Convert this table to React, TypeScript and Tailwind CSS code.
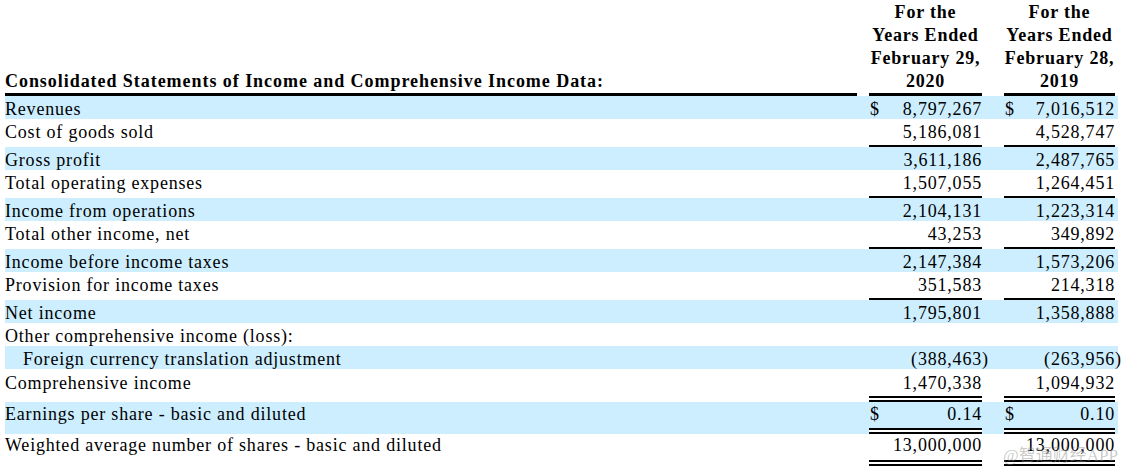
/**
 * Selected financial data — consolidated statements of income table.
 * Two fiscal-year columns, alternating light-blue bands, SEC-style rules.
 */

type Rule = "none" | "single" | "double";

interface Row {
  label: string;
  indent?: boolean;
  band: boolean;
  a?: string;
  b?: string;
  dollar?: boolean;
  paren?: boolean;
  rule: Rule;
  box: string; // height + top padding of the text line
}

const BAND = "bg-[#cceeff]";

const RULES: Record<Rule, string> = {
  none: "",
  single: "border-b-2 border-black",
  double: "border-b-[6px] border-double border-black",
};

const ROWS: Row[] = [
  { label: "Revenues", band: true, a: "8,797,267", b: "7,016,512", dollar: true, rule: "none", box: "h-[23px] pt-[2px]" },
  { label: "Cost of goods sold", band: false, a: "5,186,081", b: "4,528,747", rule: "single", box: "h-[26px] pt-[2px]" },
  { label: "Gross profit", band: true, a: "3,611,186", b: "2,487,765", rule: "none", box: "h-[23px] pt-[2px]" },
  { label: "Total operating expenses", band: false, a: "1,507,055", b: "1,264,451", rule: "single", box: "h-[26px] pt-[2px]" },
  { label: "Income from operations", band: true, a: "2,104,131", b: "1,223,314", rule: "none", box: "h-[23px] pt-[2px]" },
  { label: "Total other income, net", band: false, a: "43,253", b: "349,892", rule: "single", box: "h-[26px] pt-[2px]" },
  { label: "Income before income taxes", band: true, a: "2,147,384", b: "1,573,206", rule: "none", box: "h-[23px] pt-[2px]" },
  { label: "Provision for income taxes", band: false, a: "351,583", b: "214,318", rule: "single", box: "h-[26px] pt-[2px]" },
  { label: "Net income", band: true, a: "1,795,801", b: "1,358,888", rule: "none", box: "h-[23px] pt-[2px]" },
  { label: "Other comprehensive income (loss):", band: false, rule: "none", box: "h-[23px] pt-[2px]" },
  { label: "Foreign currency translation adjustment", indent: true, band: true, a: "(388,463", b: "(263,956", paren: true, rule: "none", box: "h-[23px] pt-[2px]" },
  { label: "Comprehensive income", band: false, a: "1,470,338", b: "1,094,932", rule: "double", box: "h-[27px] pt-[3px]" },
  { label: "Earnings per share - basic and diluted", band: true, a: "0.14", b: "0.10", dollar: true, rule: "double", box: "h-[26px] pt-[1px]" },
  { label: "Weighted average number of shares - basic and diluted", band: false, a: "13,000,000", b: "13,000,000", rule: "double", box: "h-[26px]" },
];

function Amount({ value, dollar, rule, band, box, width }: {
  value?: string;
  dollar?: boolean;
  rule: Rule;
  band: boolean;
  box: string;
  width: string;
}) {
  return (
    <div className={`${width} shrink-0 bg-clip-padding ${band ? BAND : ""} ${RULES[rule]}`}>
      <div className={`${box} flex justify-between whitespace-nowrap`}>
        <span className="pl-px">{dollar ? "$" : ""}</span>
        <span>{value ?? ""}</span>
      </div>
    </div>
  );
}

function DataRow({ row }: { row: Row }) {
  const bg = row.band ? BAND : "";
  return (
    <div className="flex">
      <div className={`w-[852px] shrink-0 ${bg}`}>
        <div className={`${row.box} whitespace-nowrap ${row.indent ? "pl-[18px]" : ""}`}>{row.label}</div>
      </div>
      <div className={`w-[12px] shrink-0 ${bg}`} />
      <Amount value={row.a} dollar={row.dollar} rule={row.rule} band={row.band} box={row.box} width="w-[113px]" />
      <div className={`w-[22px] shrink-0 ${bg}`}>
        <div className={`${row.box} whitespace-nowrap`}>{row.paren ? ")" : ""}</div>
      </div>
      <Amount value={row.b} dollar={row.dollar} rule={row.rule} band={row.band} box={row.box} width="w-[111px]" />
      <div className={`w-[3px] shrink-0 ${bg}`}>
        <div className={`${row.box} whitespace-nowrap`}>{row.paren ? ")" : ""}</div>
      </div>
    </div>
  );
}

function ColumnHead({ date, year, width }: { date: string; year: string; width: string }) {
  return (
    <div className={`${width} shrink-0 border-b-[3px] border-black text-center font-bold whitespace-nowrap`}>
      <div>For the</div>
      <div>Years Ended</div>
      <div>{date}</div>
      <div>{year}</div>
    </div>
  );
}

export default function App() {
  return (
    <div
      className="relative h-[473px] w-[1123px] overflow-hidden bg-white text-[18px] leading-[23px] tracking-[0.8px] text-black"
      style={{ fontFamily: '"Liberation Serif", "Noto Sans CJK SC", serif' }}
    >
      <div className="ml-[5px] w-[1113px] pt-px">
        {/* header */}
        <div className="flex items-end">
          <div className="w-[852px] shrink-0 border-b-[3px] border-black font-bold tracking-[0.95px] whitespace-nowrap">
            Consolidated Statements of Income and Comprehensive Income Data:
          </div>
          <div className="w-[12px] shrink-0" />
          <ColumnHead date="February 29," year="2020" width="w-[113px]" />
          <div className="w-[22px] shrink-0" />
          <ColumnHead date="February 28," year="2019" width="w-[111px]" />
          <div className="w-[3px] shrink-0" />
        </div>

        {ROWS.map(row => (
          <DataRow key={row.label} row={row} />
        ))}
      </div>

      {/* watermark */}
      <div className="absolute left-[1003px] top-[444px] text-[17px] tracking-normal whitespace-nowrap text-[#8a8a8a]/45">
        @智通财经APP
      </div>
    </div>
  );
}
